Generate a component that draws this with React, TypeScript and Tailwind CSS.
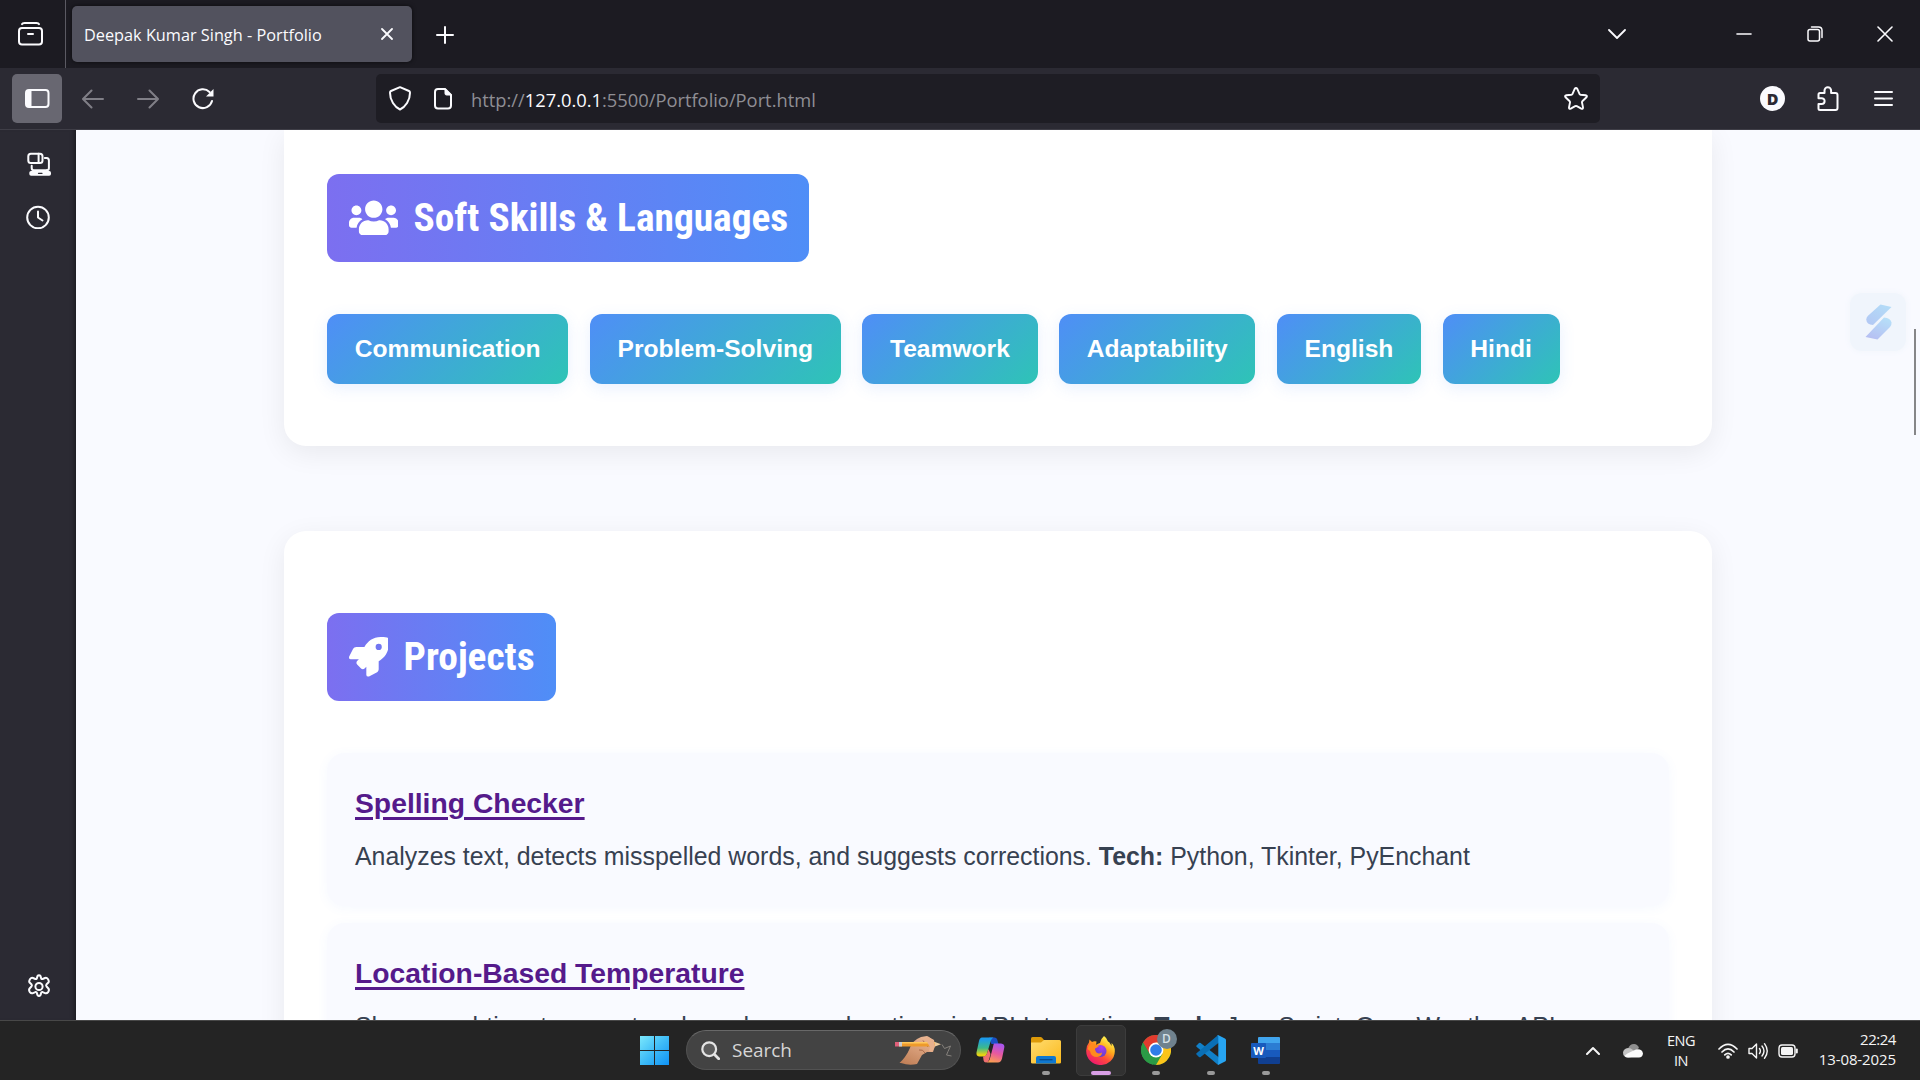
import type { ReactNode } from "react";
import { FaRocket, FaUsers } from "react-icons/fa";

const skills = ["Communication", "Problem-Solving", "Teamwork", "Adaptability", "English", "Hindi"];

const projects = [
  {
    title: "Spelling Checker",
    text: "Analyzes text, detects misspelled words, and suggests corrections.",
    tech: "Python, Tkinter, PyEnchant",
  },
  {
    title: "Location-Based Temperature",
    text: "Shows real-time temperature based on user location via API Integration.",
    tech: "JavaScript, OpenWeather API",
  },
];

function Stroke({ w, h, sw = 2, className = "", children }: { w: number; h: number; sw?: number; className?: string; children: ReactNode }) {
  return (
    <svg
      width={w}
      height={h}
      viewBox={`0 0 ${w} ${h}`}
      fill="none"
      stroke="currentColor"
      strokeWidth={sw}
      strokeLinecap="round"
      strokeLinejoin="round"
      className={"shrink-0 " + className}
    >
      {children}
    </svg>
  );
}

function TabBar() {
  return (
    <div className="flex h-[68px] items-center bg-[#1c1b22] text-[#fbfbfe]">
      <div className="flex h-full w-[66px] items-center border-r border-[#5b5a63] pl-[18px]">
        <Stroke w={25} h={24}>
          <path d="M4 2.2Q4.5 1 6.5 1h12Q20.5 1 21 2.2" />
          <rect x="1" y="6" width="23" height="16.5" rx="3" />
          <path d="M10 12h5" />
        </Stroke>
      </div>
      <div className="ml-[6px] flex h-14 w-[340px] items-center rounded-[5px] bg-[#52525e] pr-[19px] pl-3 shadow-[0_0_4px_rgba(0,0,0,0.6)]">
        <span className="grow pt-[2px] text-[16.3px] whitespace-nowrap">Deepak Kumar Singh - Portfolio</span>
        <Stroke w={12} h={12} sw={1.8}>
          <path d="M1 1l10 10M11 1L1 11" />
        </Stroke>
      </div>
      <Stroke w={18} h={18} className="mt-[2px] ml-6">
        <path d="M9 1v16M1 9h16" />
      </Stroke>
      <div className="grow" />
      <Stroke w={18} h={10} sw={1.8} className="mr-[110px]">
        <path d="M1 1l8 8 8-8" />
      </Stroke>
      <Stroke w={16} h={16} sw={1.6} className="mr-[55px]">
        <path d="M1 8h14" />
      </Stroke>
      <Stroke w={16} h={16} sw={1.5} className="mr-[54px]">
        <rect x="1" y="3.5" width="11.5" height="11.5" rx="2" />
        <path d="M4.5 1h7q3.500 0 3.500 3.500v7" />
      </Stroke>
      <Stroke w={16} h={16} sw={1.6} className="mr-[27px]">
        <path d="M1 1l14 14M15 1L1 15" />
      </Stroke>
    </div>
  );
}

function NavBar() {
  return (
    <div className="flex h-[62px] items-center border-b border-[#3f3e47] bg-[#2b2a33] text-[#fbfbfe]">
      <div className="ml-3 flex h-[49px] w-[50px] items-center justify-center rounded-[5px] bg-[#686771]">
        <Stroke w={25} h={19} className="ml-px">
          <rect x="1" y="1" width="22.5" height="17" rx="3" />
          <path d="M2 2h4.500v15H2z" fill="currentColor" stroke="none" />
        </Stroke>
      </div>
      <Stroke w={22} h={20} className="ml-5 text-[#807f87]">
        <path d="M21 10H1.500M9.500 1.500L1 10l8.500 8.500" />
      </Stroke>
      <Stroke w={22} h={20} className="ml-[33px] text-[#807f87]">
        <path d="M1 10h19.500M12.500 1.500L21 10l-8.500 8.500" />
      </Stroke>
      <Stroke w={23} h={22} className="ml-[33px]">
        <path d="M17.500 4A9.400 9.400 0 1 0 20 13" />
        <path d="M21.500 1v7.500H14z" fill="currentColor" stroke="none" />
      </Stroke>
      <div className="ml-[161px] flex h-[49px] w-[1224px] items-center rounded-[5px] bg-[#1e1d24] pr-3 pl-[13px]">
        <Stroke w={22} h={25}>
          <path d="M11 1.200L20 5q1 .5 1 1.700C21 14.500 16.500 21 11 23.500 5.500 21 1 14.500 1 6.700Q1 5.500 2 5z" />
        </Stroke>
        <Stroke w={18} h={22} className="ml-[23px]">
          <path d="M11 1H4Q1 1 1 4v13.500q0 3 3 3h10q3 0 3-3V7z" />
          <path d="M11 1v4.500q0 1.500 1.500 1.500H17z" fill="currentColor" strokeWidth={1} />
        </Stroke>
        <p className="mt-[2px] ml-[19px] grow text-[18.32px] whitespace-nowrap text-[#8f8e94]">
          http://<span className="text-[#fbfbfe]">127.0.0.1</span>:5500/Portfolio/Port.html
        </p>
        <Stroke w={24} h={23} sw={1.9}>
          <path d="M10.700 1.900q1.300-1.900 2.600 0l2.300 5.200q.3.600 1 .7l5 .5q2 .4.900 2l-4.200 4q-.5.500-.3 1.200l1 4.900q.1 2-1.700 1.300l-4.500-2.500q-.8-.4-1.600 0l-4.500 2.500q-1.800.7-1.700-1.300l1-4.900q.2-.7-.3-1.200l-4.200-4q-1.100-1.600.900-2l5-.5q.7-.1 1-.7z" />
        </Stroke>
      </div>
      <div className="ml-[160px] flex size-[25px] items-center justify-center rounded-full bg-[#fbfbfe] text-[16px] leading-none font-extrabold text-[#2b2a33]">
        D
      </div>
      <Stroke w={22} h={26} className="ml-[32px]">
        <path d="M1.500 8.500q0-1.500 1.500-1.500h4.500V4.500a3.300 3.300 0 0 1 6.600 0V7H18.500q2 0 2 2v13q0 2-2 2h-15.500q-1.500 0-1.500-1.500V18h3.200a2.800 2.800 0 0 0 0-5.800H1.500z" />
      </Stroke>
      <Stroke w={19} h={16} className="-mt-px ml-[35px]">
        <path d="M1 2h17M1 8.500h17M1 15h17" />
      </Stroke>
    </div>
  );
}

function SideBar() {
  return (
    <div className="relative z-10 flex w-[76px] flex-col bg-[#2b2a33] pt-[22px] pb-[21px] pl-[26px] text-[#fbfbfe] shadow-[inset_-5px_0_5px_-4px_rgba(0,0,0,0.45)]">
      <Stroke w={26} h={25}>
        <rect x="2.300" y="1.800" width="14.200" height="9.300" rx="2.500" />
        <path d="M12.600 1.800v9.300" />
        <path d="M18.800 6h1.800q2.300 0 2.300 2.500v7.500q0 2.200-2 2.200" />
        <path d="M5.700 13.800v2.200q0 2.200 2.200 2.200h13" />
        <path d="M3.300 20.700q0-1.700 1.700-1.700h18.300q1.700 0 1.700 1.700v1.300q0 1.800-1.800 1.800H5.100q-1.800 0-1.800-1.800z" fill="currentColor" stroke="none" />
        <path d="M12.500 21.300h3.500" stroke="#2b2a33" strokeWidth={1.3} />
      </Stroke>
      <Stroke w={24} h={24} className="mt-7">
        <circle cx="12" cy="12.500" r="10.800" />
        <path d="M12 6.500v6l4.500 3" />
      </Stroke>
      <div className="grow" />
      <svg width="24" height="25" viewBox="0 0 24 25" fill="none" stroke="currentColor" strokeWidth="2" strokeLinejoin="round" className="ml-[0.500px]">
        <circle cx="12" cy="12.500" r="3.600" />
        <path d="M10 3.800q.3-2.500 2-2.500t2 2.500q.2 1.500 1.600 1.200l2.400-1q1.700-.6 2.900 1 1.500 2.300.5 3.500l-1.800 1.700q-1 1.100 0 2.300l1.800 2q1.200 1.300-.3 3.600-1.300 1.700-3.100 1l-2.400-1q-1.400-.3-1.600 1.200-.3 2.600-2 2.600t-2-2.600q-.2-1.500-1.600-1.200l-2.400 1q-1.800.7-3.100-1-1.500-2.300-.3-3.600l1.800-2q1-1.200 0-2.300L2.600 8.500q-1-1.200.5-3.500 1.200-1.600 2.900-1l2.400 1q1.400.3 1.600-1.200z" />
      </svg>
    </div>
  );
}

function Heading({ icon, children }: { icon: ReactNode; children: ReactNode }) {
  return (
    <h2 className="flex h-[88px] w-fit items-center gap-[15.5px] rounded-xl bg-linear-90/srgb from-[#7c6ff0] to-[#4f8ef7] pr-[21px] pl-[21.5px] text-white">
      {icon}
      <span className="font-['Roboto_Condensed','Roboto',sans-serif] text-[39.4px] leading-[86px] font-bold whitespace-nowrap [font-stretch:75%]">{children}</span>
    </h2>
  );
}

function Page() {
  return (
    <div className="relative flex grow flex-col items-center overflow-hidden bg-[#f9faff] font-['Liberation_Sans',Arial,sans-serif]">
      <section className="h-[316px] w-[1428px] shrink-0 rounded-b-[22px] bg-white pt-11 pl-[43px] shadow-[0_7px_28px_rgba(0,0,0,0.07)]">
        <Heading icon={<FaUsers className="h-[39.6px] w-[49.5px]" />}>Soft Skills &amp; Languages</Heading>
        <div className="mt-[52px] flex gap-[21.4px]">
          {skills.map((s) => (
            <span
              key={s}
              className="flex h-[70px] items-center rounded-xl bg-linear-135/srgb from-[#4f8ef7] to-[#2ec4b6] px-[27.8px] text-[24.6px] font-bold text-white shadow-[0_4px_16px_rgba(79,142,247,0.13)]"
            >
              {s}
            </span>
          ))}
        </div>
      </section>
      <section className="mt-[85px] w-[1428px] shrink-0 rounded-t-[22px] bg-white px-[43px] pt-[82px] shadow-[0_7px_28px_rgba(0,0,0,0.07)]">
        <Heading icon={<FaRocket className="size-[39.6px]" />}>Projects</Heading>
        <div className="mt-[52px] flex flex-col gap-[17px]">
          {projects.map((p) => (
            <article key={p.title} className="h-[153px] rounded-[18px] bg-[#f9faff] px-7 pt-[29px] shadow-[0_2px_12px_rgba(79,142,247,0.06)]">
              <h3 className="text-[28.3px] leading-[42px] font-bold text-[#551a8b] underline decoration-[3px] underline-offset-[3.500px]">{p.title}</h3>
              <p className="mt-3 text-[24.88px] leading-10 whitespace-nowrap text-[#374151]">
                {p.text} <b>Tech:</b> {p.tech}
              </p>
            </article>
          ))}
        </div>
      </section>
      <div className="absolute top-[163px] left-[1774px] flex h-[58px] w-[56px] items-center justify-center rounded-[12px] bg-[#f0f5fc] shadow-[0_0_4px_2px_#f4f7fd]">
        <svg width="27" height="36" viewBox="0 0 27 36">
          <defs>
            <linearGradient id="widget-a" x1="1" y1="0" x2="0.200" y2="1">
              <stop offset="0" stopColor="#b3def8" />
              <stop offset="1" stopColor="#b3c9f4" />
            </linearGradient>
            <linearGradient id="widget-b" x1="0.800" y1="0" x2="0.300" y2="1">
              <stop offset="0" stopColor="#b6e0f9" />
              <stop offset="1" stopColor="#b6bff2" />
            </linearGradient>
          </defs>
          <path d="M15.500.5L26.500 3 8 21Q1.500 20.500 1.300 15.500q0-2 1.700-3.700z" fill="url(#widget-a)" />
          <path d="M12.500 35.500L.5 33 19 13.500q6.500.5 7.500 5 .3 2.500-1.500 4.500z" fill="url(#widget-b)" />
        </svg>
      </div>
      <div className="absolute top-[199px] left-[1838px] h-[106px] w-[2px] bg-[#868688]" />
    </div>
  );
}

function PencilHand() {
  return (
    <svg width="59" height="32" viewBox="0 0 59 32">
      <defs>
        <linearGradient id="hand" x1="0.800" y1="0" x2="0.200" y2="1">
          <stop offset="0" stopColor="#ecb896" />
          <stop offset="1" stopColor="#c08058" />
        </linearGradient>
      </defs>
      <path d="M4.500 29Q11 23 14.500 15 17 6.500 26 3l6-1 7 4 1 6-2 6-6 0-5 3-5 9q-8 2-16-1z" fill="url(#hand)" />
      <path d="M28 6.500l5 6.500M33 6l3 8M24 16q4-1 6 3" stroke="#a8694a" strokeWidth="1" fill="none" />
      <path d="M4 8h36v4.500H4z" fill="#ee9a2c" />
      <path d="M4 8h36v1.500H4z" fill="#ffc95c" />
      <path d="M0 8h4v4.500H0z" fill="#e0607a" />
      <path d="M4 8h3v4.500H4z" fill="#c9ccd1" />
      <path d="M40 8l6 2.200-6 2.300z" fill="#eccb9d" />
      <path d="M29 5l4-2.500 6 4.500 1 5-3 6-3-1 1-4-3-5z" fill="#e8b08c" />
      <path d="M47 10.500l2.500 4 6-2.500-2.500 5.500-1.500 3.500 5 1" stroke="#85817c" strokeWidth="1" fill="none" />
    </svg>
  );
}

function CopilotIcon() {
  return (
    <svg width="29" height="26" viewBox="0 0 29 26">
      <defs>
        <linearGradient id="cp-l" x1="0" y1="0" x2="0" y2="1">
          <stop offset="0.100" stopColor="#1c9bea" />
          <stop offset="0.550" stopColor="#3dba8a" />
          <stop offset="0.900" stopColor="#e8d313" />
        </linearGradient>
        <linearGradient id="cp-r" x1="0.600" y1="0" x2="0.300" y2="1">
          <stop offset="0" stopColor="#a855ee" />
          <stop offset="0.500" stopColor="#e8599f" />
          <stop offset="1" stopColor="#fba04f" />
        </linearGradient>
      </defs>
      <path d="M13 .5h5.500q2 0 2.700 2L22.500 7h-7z" fill="#1b4fc4" />
      <path d="M6 .5h11.500q-2 .8-2.600 3L11 16.500Q10 20 7 19.500H3Q0 19 .5 15.500L3 4Q3.800.5 6 .5z" fill="url(#cp-l)" />
      <path d="M18 6.500h7q4 .5 3.300 4L26 21.500q-1 4-4 4H10.500q2.500-.8 3.200-3L17 10q.3-2.500 1-3.500z" fill="url(#cp-r)" />
      <path d="M7 19.500q3 0 4-3l1.500-4.500 2 5-1.500 6q-1 2.500-3 2.500-2 0-2.400-2z" fill="#ef6f6f" />
    </svg>
  );
}

function ExplorerIcon() {
  return (
    <svg width="30" height="27" viewBox="0 0 30 27">
      <defs>
        <linearGradient id="folder" x1="0" y1="0" x2="1" y2="1">
          <stop offset="0" stopColor="#ffdc70" />
          <stop offset="1" stopColor="#fbb91c" />
        </linearGradient>
      </defs>
      <path d="M0 1.500Q0 0 1.500 0h8q1 0 1.600.7L13 3v5H0z" fill="#dd9a09" />
      <path d="M0 5.500h10l3-2.500h15.500Q30 3 30 4.500v21q0 1-1.500 1h-27Q0 26.500 0 25.500z" fill="url(#folder)" />
      <path d="M5 26.500V21q0-2 2-2h16q2 0 2 2v5.500z" fill="#0f78d0" />
      <path d="M8.500 22.700h13" stroke="#0a4a8c" strokeWidth="1.300" />
    </svg>
  );
}

function FirefoxIcon() {
  return (
    <svg width="29" height="29" viewBox="0 0 29 29">
      <defs>
        <linearGradient id="ff-a" x1="0.800" y1="0.100" x2="0.250" y2="0.950">
          <stop offset="0" stopColor="#fff44f" />
          <stop offset="0.350" stopColor="#ffa81c" />
          <stop offset="0.650" stopColor="#ff4a3c" />
          <stop offset="1" stopColor="#ee1a6e" />
        </linearGradient>
        <radialGradient id="ff-b" cx="0.600" cy="0.200" r="0.900">
          <stop offset="0" stopColor="#b13af0" />
          <stop offset="1" stopColor="#5243c8" />
        </radialGradient>
      </defs>
      <path d="M18 0q3 2 4 5.500 1.500.6 2 2l1.700 2.500-.2-3Q29 10 28.800 15.500A14.300 13.800 0 0 1 .2 15Q0 10 3 6.500L3.500 3.500 6 6q2-1 4.500-.5L10 9q2-1.500 4-2 .5-4 4-7z" fill="url(#ff-a)" />
      <circle cx="14.500" cy="15" r="6" fill="url(#ff-b)" />
      <path d="M1.500 13Q3 7 8 7.500l5 2.500-4 3 1 3q2 2.500 6 .5 0 4-5 4.500-6 0-7-6z" fill="#ff8a1e" />
      <path d="M9 12.500l4.500-.5-2 2.200H9z" fill="#8a3bd8" />
    </svg>
  );
}

function ChromeIcon() {
  return (
    <svg width="30" height="30" viewBox="0 0 30 30">
      <circle cx="15" cy="15" r="15" fill="#2b9b46" />
      <path d="M15 15L2 7.500A15 15 0 0 1 28 7.500z" fill="#e23b2e" />
      <path d="M15 7.500h13A15 15 0 0 1 15 30l6.500-11.300z" fill="#fcc419" />
      <path d="M2 7.500l6.500 11.200L15 15V7.500z" fill="#e23b2e" />
      <path d="M2 7.500L8.500 18.700 15 22.500l-3 7.200A15 15 0 0 1 2 7.500z" fill="#2b9b46" />
      <circle cx="15" cy="15" r="7.400" fill="#fff" />
      <circle cx="15" cy="15" r="5.800" fill="#2f7de9" />
    </svg>
  );
}

function CodeIcon() {
  return (
    <svg width="30" height="30" viewBox="0 0 30 30">
      <path d="M.5 10.500L3 8q.8-.6 1.600 0L23 22.500V29.500L21 29 .5 11.700q-.6-.6 0-1.200z" fill="#1180c8" />
      <path d="M.5 19.500L3 22q.8.600 1.600 0L23 7.500V.5L21 1 .5 18.300q-.6.600 0 1.200z" fill="#0a6fb5" />
      <path d="M22.500.3L29 3.400q1 .5 1 1.600v20q0 1.100-1 1.600l-6.500 3.100q-1 .3-1.700-.4 1.500.4 1.500-1.300V2q0-1.700-1.500-1.300.7-.7 1.700-.4z" fill="#27a5f2" />
    </svg>
  );
}

function WordIcon() {
  return (
    <div className="relative h-[27px] w-[29px]">
      <div className="ml-[7px] flex h-full flex-col overflow-hidden rounded-[1px]">
        <div className="grow bg-[#41a5ee]" />
        <div className="grow bg-[#2b7cd3]" />
        <div className="grow bg-[#185abd]" />
        <div className="grow bg-[#103f91]" />
      </div>
      <div className="absolute top-[6px] left-0 flex size-[15px] items-center justify-center rounded-[1px] bg-[#185abd] text-[11px] leading-none font-bold text-white">W</div>
    </div>
  );
}

function TaskApp({ icon, active, running, badge }: { icon: ReactNode; active?: boolean; running?: boolean; badge?: string }) {
  return (
    <div className="flex h-full w-[55px] justify-center">
      <div
        className={
          active
            ? "relative mt-1 flex h-[51px] w-[50px] justify-center rounded-[5px] border border-[#3c3c3c] bg-[#313131] pt-[9px]"
            : "relative mt-1 flex h-[51px] w-[50px] justify-center pt-[10px]"
        }
      >
        <div className="flex h-[30px] items-center">{icon}</div>
        {badge && (
          <span className="absolute top-[4px] left-[26px] flex size-5 items-center justify-center rounded-full bg-[#70828e] text-[12px] leading-none font-semibold text-[#d5e0e6]">
            {badge}
          </span>
        )}
        {active && <span className="absolute bottom-0 h-1 w-5 rounded-full bg-[#d99fe6]" />}
        {running && <span className="absolute bottom-[1px] h-1 w-2 rounded-full bg-[#999999]" />}
      </div>
    </div>
  );
}

function TaskBar() {
  return (
    <div className="relative z-20 flex h-[60px] items-stretch border-t border-[#484848] bg-[#242424] text-[#f5f5f5]">
      <div className="flex w-[686px] items-center justify-end pr-[17px]">
        <svg width="29" height="29" viewBox="0 0 29 29">
          <defs>
            <linearGradient id="win" x1="0" y1="0" x2="29" y2="29" gradientUnits="userSpaceOnUse">
              <stop offset="0" stopColor="#7be8fc" />
              <stop offset="0.500" stopColor="#3fbcf7" />
              <stop offset="1" stopColor="#0f92f5" />
            </linearGradient>
          </defs>
          <path d="M0 0h14v14H0zM15 0h14v14H15zM0 15h14v14H0zM15 15h14v14H15z" fill="url(#win)" />
        </svg>
      </div>
      <div className="mt-[9px] flex h-10 w-[275px] items-center rounded-full border border-[#525252] border-t-[#686868] bg-[#434343] pr-[6px] pl-[14px]">
        <Stroke w={19} h={19} sw={2.2} className="text-[#e4e4e4]">
          <circle cx="8.200" cy="8.200" r="6.900" fill="#5c5c5c" />
          <path d="M13.500 13.500l4.200 4.200" strokeWidth={2.8} />
        </Stroke>
        <span className="ml-[12px] grow text-[18.95px] text-[#d6d6d6]">Search</span>
        <PencilHand />
      </div>
      <div className="ml-[2px] flex">
        <TaskApp icon={<CopilotIcon />} />
        <TaskApp icon={<ExplorerIcon />} running />
        <TaskApp icon={<FirefoxIcon />} active />
        <TaskApp icon={<ChromeIcon />} running badge="D" />
        <TaskApp icon={<CodeIcon />} running />
        <TaskApp icon={<WordIcon />} running />
      </div>
      <div className="grow" />
      <div className="flex items-center pr-6 text-[15px] leading-5">
        <Stroke w={14} h={9} className="mr-[23px]">
          <path d="M1 8l6-6 6 6" />
        </Stroke>
        <svg width="20" height="14" viewBox="0 0 20 14" className="mr-6">
          <path d="M5 5q1.500-5 6-5 3.500 0 5 4l-6 5z" fill="#8f8f8f" />
          <path d="M5 13.500Q0 13 0 8.500q.5-4 5-4.500 3 0 5 2l6 6z" fill="#c4c4c4" />
          <path d="M1.500 12q2-2.500 6-4L13 5.500q6-1 7 4-.5 4-4 4H5q-2.500 0-3.500-1.500z" fill="#fafafa" />
        </svg>
        <div className="mr-[23px] w-7 text-center text-[14.5px] tracking-[-0.5px]">
          ENG
          <br />
          IN
        </div>
        <Stroke w={20} h={16} sw={1.7} className="mr-[10px]">
          <path d="M1 6q9-9 18 0M4 9q6-6 12 0M6.800 11.800q3.200-3 6.400 0" />
          <circle cx="10" cy="14" r="1" fill="currentColor" />
        </Stroke>
        <Stroke w={20} h={18} sw={1.4} className="mr-[10px]">
          <path d="M1 6.500h3L8.500 2v14L4 11.500H1z" />
          <path d="M11.500 6.500q1.800 2.500 0 5M14 4q4 5 0 10M16.500 1.700q5.500 7.300 0 14.600" />
        </Stroke>
        <Stroke w={20} h={14} sw={1.4} className="mr-[20px]">
          <rect x="1" y="1" width="16" height="12" rx="3" />
          <rect x="3" y="3" width="12" height="8" rx="1.500" fill="currentColor" stroke="none" />
          <path d="M18.800 5.500v3" strokeWidth={2} />
        </Stroke>
        <div className="w-[78px] pb-[3px] text-right">
          <div className="tracking-[-0.45px]">22:24</div>
          <div className="tracking-[-0.1px] whitespace-nowrap">13-08-2025</div>
        </div>
      </div>
    </div>
  );
}

export default function App() {
  return (
    <div className="flex h-[1080px] w-[1920px] flex-col overflow-hidden font-['Open_Sans','Noto_Sans',sans-serif]">
      <TabBar />
      <NavBar />
      <div className="flex h-[890px]">
        <SideBar />
        <Page />
      </div>
      <TaskBar />
    </div>
  );
}
